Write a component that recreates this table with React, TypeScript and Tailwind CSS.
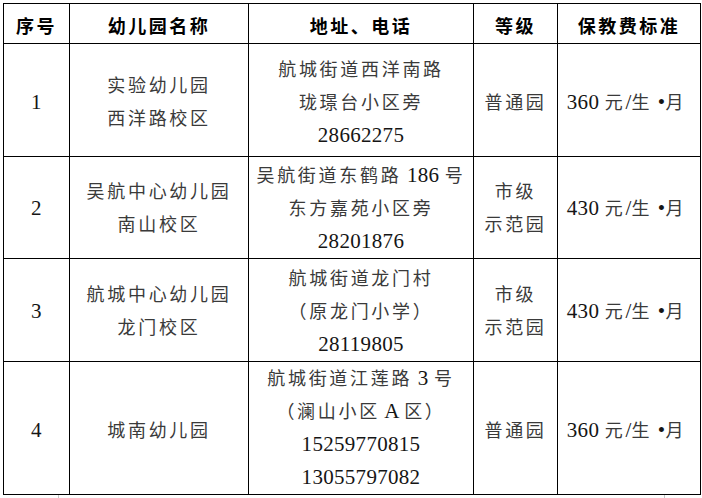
import React from 'react';

type Row = {
  no: string;
  name: string[];
  addr: string[];
  level: string[];
  fee: string;
  h: string;
  pad: string;
};

const rows: Row[] = [
  {
    no: '1',
    name: ['实验幼儿园', '西洋路校区'],
    addr: ['航城街道西洋南路', '珑璟台小区旁', '28662275'],
    level: ['普通园'],
    fee: '360 元/生 •月',
    h: 'h-[113px]',
    pad: 'pt-[5px]',
  },
  {
    no: '2',
    name: ['吴航中心幼儿园', '南山校区'],
    addr: ['吴航街道东鹤路 186 号', '东方嘉苑小区旁', '28201876'],
    level: ['市级', '示范园'],
    fee: '430 元/生 •月',
    h: 'h-[102px]',
    pad: 'pt-[2px]',
  },
  {
    no: '3',
    name: ['航城中心幼儿园', '龙门校区'],
    addr: ['航城街道龙门村', '（原龙门小学）', '28119805'],
    level: ['市级', '示范园'],
    fee: '430 元/生 •月',
    h: 'h-[103px]',
    pad: 'pt-[3px]',
  },
  {
    no: '4',
    name: ['城南幼儿园'],
    addr: ['航城街道江莲路 3 号', '（澜山小区 A 区）', '15259770815', '13055797082'],
    level: ['普通园'],
    fee: '360 元/生 •月',
    h: 'h-[133px]',
    pad: 'pt-[5px]',
  },
];

// CJK runs get the wide Word-style spacing, digits and latin stay tight
const Line = ({ text }: { text: string }) => {
  const parts = text.split(/([\u3000-\u9fff\uff00-\uffef]+)/);
  return (
    <div className="flex h-[33px] items-center justify-center">
      {parts.map((p, i) =>
        i % 2 === 1 ? (
          <span key={i} className="whitespace-pre leading-none text-[18px] tracking-[2.7px] text-[#3a3a3a]">
            {p}
          </span>
        ) : (
          <span key={i} className="whitespace-pre leading-none text-[21px] tracking-[0.3px] text-[#151515]">
            {p}
          </span>
        )
      )}
    </div>
  );
};

const Cell = ({ lines, pad, extra = '' }: { lines: string[]; pad: string; extra?: string }) => (
  <td className={`border border-black p-0 ${lines.length < 4 ? pad : 'pt-0'} ${extra} text-center align-middle`}>
    {lines.map((l, i) => (
      <Line key={i} text={l} />
    ))}
  </td>
);

export default function App() {
  return (
    <div
      className="w-[702px] h-[498px] bg-white pt-[3px] pl-[3px]"
      style={{ fontFamily: '"Liberation Serif", "Noto Sans CJK SC", serif' }}
    >
      <table className="table-fixed border-collapse w-[697px]">
        <colgroup>
          <col className="w-[66px]" />
          <col className="w-[179px]" />
          <col className="w-[225px]" />
          <col className="w-[84px]" />
          <col className="w-[143px]" />
        </colgroup>
        <thead>
          <tr className="h-[40px]">
            {['序号', '幼儿园名称', '地址、电话', '等级', '保教费标准'].map((t) => (
              <th
                key={t}
                className="border border-black p-0 pt-[3px] text-center align-middle text-[18px] leading-[24px] font-bold tracking-[2.5px] text-black"
                style={{ fontFamily: '"Noto Sans CJK SC", sans-serif' }}
              >
                {t}
              </th>
            ))}
          </tr>
        </thead>
        <tbody>
          {rows.map((r) => (
            <tr key={r.no} className={r.h}>
              <Cell lines={[r.no]} pad={r.pad} />
              <Cell lines={r.name} pad={r.pad} />
              <Cell lines={r.addr} pad={r.pad} />
              <Cell lines={r.level} pad={r.pad} />
              <Cell lines={[r.fee]} pad={r.pad} extra="pr-[5px]" />
            </tr>
          ))}
        </tbody>
      </table>
      <div className="flex h-[3px]">
        <div className="ml-[55px] w-px h-full bg-[#c8c8c8]" />
        <div className="ml-[605px] w-px h-full bg-[#c8c8c8]" />
      </div>
    </div>
  );
}
